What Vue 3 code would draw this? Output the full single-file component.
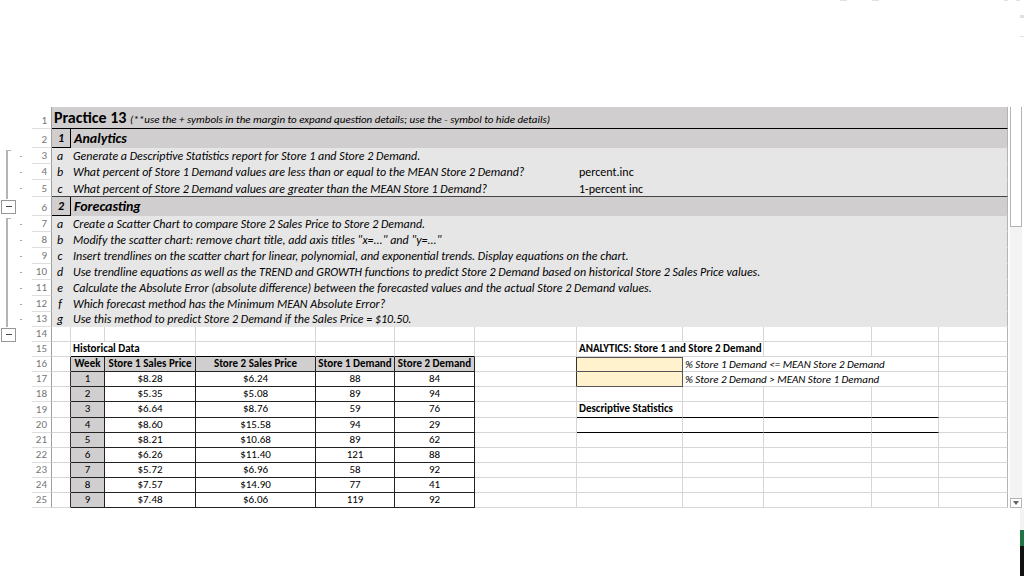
<template>
  <div class="page">
    <header class="top-strip">
      <div class="top-marks">
        <i class="wide"></i>
        <i class="wide second"></i>
        <i></i>
        <i></i>
      </div>
      <div class="side-marks">
        <i class="thick"></i>
        <i></i>
      </div>
    </header>

    <main class="workbook">
      <table class="sheet">
        <colgroup>
          <col v-for="(width, i) in columns" :key="i" :style="{ width: width + 'px' }">
          <col>
        </colgroup>
        <tbody>
          <tr v-for="row in rows" :key="row.n" :class="row.type">
            <td class="outline" :class="row.group">
              <button v-if="row.toggle" type="button" class="toggle" aria-label="Hide detail"></button>
              <span v-else-if="row.group" class="dot"></span>
            </td>
            <th class="num" scope="row">{{ row.n }}</th>
            <td
              v-for="(cell, i) in row.cells"
              :key="i"
              :colspan="cell.span || 1"
              :class="cell.cls"
            >{{ cell.text }}<span v-if="cell.note" class="note">{{ cell.note }}</span></td>
          </tr>
        </tbody>
      </table>

      <div class="scrollbar">
        <div class="thumb"></div>
        <button type="button" class="down" aria-label="Scroll down">
          <svg width="6" height="4" viewBox="0 0 6 4"><path d="M0 0h6L3 4z" fill="#666" /></svg>
        </button>
      </div>
    </main>

    <footer class="bottom-strip">
      <div class="edge">
        <span class="pale"></span>
        <span class="green"></span>
        <span class="dark"></span>
      </div>
    </footer>
  </div>
</template>

<script setup>
// outline gutter, row numbers, then A to K; the last column takes the rest
const columns = [32, 20, 19, 34, 91, 120, 79, 80, 102, 106, 81, 108, 67]

const blank = (count) => Array.from({ length: count }, () => ({}))

function question(n, letter, text, extra) {
  const cells = [{ text: letter, cls: 'letter' }]
  if (extra) {
    cells.push({ text, span: 6, cls: 'question' }, { text: extra, span: 5, cls: 'hint' })
  } else {
    cells.push({ text, span: 11, cls: 'question' })
  }
  const first = letter === 'a' ? ' first' : ''
  return { n, type: 'detail', group: 'line' + first, cells }
}

function section(n, number, title, toggle) {
  return {
    n,
    type: 'section',
    toggle,
    cells: [{ text: number, cls: 'boxed' }, { text: title, span: 11, cls: 'section-title' }]
  }
}

const history = [
  [1, '$8.28', '$6.24', 88, 84],
  [2, '$5.35', '$5.08', 89, 94],
  [3, '$6.64', '$8.76', 59, 76],
  [4, '$8.60', '$15.58', 94, 29],
  [5, '$8.21', '$10.68', 89, 62],
  [6, '$6.26', '$11.40', 121, 88],
  [7, '$5.72', '$6.96', 58, 92],
  [8, '$7.57', '$14.90', 77, 41],
  [9, '$7.48', '$6.06', 119, 92]
]

// right-hand side of the rows that hold more than plain cells
const side = {
  17: [
    { cls: 'before-input' },
    { cls: 'input-cell' },
    { text: '% Store 2 Demand > MEAN Store 1 Demand', span: 3, cls: 'caption' },
    {}
  ],
  19: [
    {},
    { text: 'Descriptive Statistics', cls: 'strong ruled' },
    { cls: 'ruled' },
    { cls: 'ruled' },
    { cls: 'ruled' },
    {}
  ],
  20: [{}, { cls: 'ruled' }, { cls: 'ruled' }, { cls: 'ruled' }, { cls: 'ruled' }, {}]
}

const rows = [
  {
    n: 1,
    type: 'title',
    cells: [{
      text: 'Practice 13 ',
      note: '(**use the + symbols in the margin to expand question details; use the - symbol to hide details)',
      span: 12,
      cls: 'heading'
    }]
  },
  section(2, 1, 'Analytics', false),
  question(3, 'a', 'Generate a Descriptive Statistics report for Store 1 and Store 2 Demand.'),
  question(4, 'b', 'What percent of Store 1 Demand values are less than or equal to the MEAN Store 2 Demand?', 'percent.inc'),
  { ...question(5, 'c', 'What percent of Store 2 Demand values are greater than the MEAN Store 1 Demand?', '1-percent inc'), type: 'detail closing' },
  section(6, 2, 'Forecasting', true),
  question(7, 'a', 'Create a Scatter Chart to compare Store 2 Sales Price to Store 2 Demand.'),
  question(8, 'b', 'Modify the scatter chart: remove chart title, add axis titles "x=..." and "y=..."'),
  question(9, 'c', 'Insert trendlines on the scatter chart for linear, polynomial, and exponential trends. Display equations on the chart.'),
  question(10, 'd', 'Use trendline equations as well as the TREND and GROWTH functions to predict Store 2 Demand based on historical Store 2 Sales Price values.'),
  question(11, 'e', 'Calculate the Absolute Error (absolute difference) between the forecasted values and the actual Store 2 Demand values.'),
  question(12, 'f', 'Which forecast method has the Minimum MEAN Absolute Error?'),
  { ...question(13, 'g', 'Use this method to predict Store 2 Demand if the Sales Price = $10.50.'), type: 'detail last' },
  { n: 14, type: 'plain', toggle: true, cells: blank(12) },
  {
    n: 15,
    type: 'plain',
    cells: [
      {},
      { text: 'Historical Data', span: 2, cls: 'strong ruled' },
      { cls: 'ruled' },
      { cls: 'ruled' },
      { cls: 'ruled' },
      {},
      { text: 'ANALYTICS: Store 1 and Store 2 Demand', span: 2, cls: 'strong' },
      ...blank(3)
    ]
  },
  {
    n: 16,
    type: 'plain',
    cells: [
      { cls: 'before-table' },
      { text: 'Week', cls: 'head' },
      { text: 'Store 1 Sales Price', cls: 'head' },
      { text: 'Store 2 Sales Price', cls: 'head' },
      { text: 'Store 1 Demand', cls: 'head' },
      { text: 'Store 2 Demand', cls: 'head' },
      { cls: 'before-input' },
      { cls: 'input-cell first-input' },
      { text: '% Store 1 Demand <= MEAN Store 2 Demand', span: 3, cls: 'caption' },
      {}
    ]
  },
  ...history.map((values, i) => {
    const n = 17 + i
    return {
      n,
      type: n === 19 ? 'plain tall' : 'plain',
      cells: [
        { cls: 'before-table' },
        ...values.map((text, col) => ({ text, cls: col === 0 ? 'data week' : 'data' })),
        ...(side[n] || blank(6))
      ]
    }
  })
]
</script>

<style>
body {
  margin: 0;
  background: #fff;
}
</style>

<style scoped>
.page {
  display: flex;
  flex-direction: column;
  min-height: 100vh;
  font-family: Calibri, Carlito, Lato, sans-serif;
  font-size: 11px;
  color: #000;
  background: #fff;
}

/* remains of the window frame */
.top-strip {
  height: 107px;
  display: flex;
  justify-content: flex-end;
}
.top-marks {
  display: flex;
  gap: 8px;
}
.top-marks i {
  width: 4px;
  height: 1px;
  background: #e2e2e2;
}
.top-marks .wide {
  width: 7px;
  margin-right: 17px;
}
.top-marks .second {
  margin-right: 117px;
}
.side-marks {
  width: 4px;
  padding-top: 15px;
  display: flex;
  flex-direction: column;
  gap: 18px;
}
.side-marks i {
  height: 1px;
  background: #e0e0e0;
}
.side-marks .thick {
  height: 3px;
}

.workbook {
  display: flex;
  gap: 2px;
  padding-right: 2px;
}

.sheet {
  flex: 1;
  width: 100%;
  min-width: 0;
  table-layout: fixed;
  border-collapse: separate;
  border-spacing: 0;
}
td,
th {
  box-sizing: border-box;
  padding: 0 2px;
  line-height: 14px;
  white-space: nowrap;
  border-right: 1px solid #d6d6d6;
  border-bottom: 1px solid #d6d6d6;
  vertical-align: bottom;
}
tr > :last-child {
  border-right-color: #b4b4b4;
}

.plain { height: 15px; }
.tall { height: 16px; }
.tall td { vertical-align: top; }
.detail { height: 16px; }
.closing { height: 17px; }
.last { height: 15px; }
.title { height: 22px; }
.section { height: 19px; }

/* outline gutter */
.outline {
  position: relative;
  padding: 0;
  border: 0;
  vertical-align: middle;
}
.line::before {
  content: '';
  position: absolute;
  left: 6px;
  top: 0;
  bottom: 0;
  border-left: 2px solid #b4b4b4;
}
.first::before {
  top: 2px;
  width: 3px;
  border-top: 1px solid #b4b4b4;
}
.closing .line::before {
  bottom: -2px;
}
.dot {
  display: block;
  width: 2px;
  height: 1px;
  margin-left: 20px;
  background: #a6a6a6;
}
.toggle {
  display: flex;
  align-items: center;
  justify-content: center;
  width: 15px;
  height: 14px;
  margin: 0 0 0 1px;
  padding: 0;
  border: 1px solid #969696;
  background: #fff;
}
.toggle::before {
  content: '';
  width: 6px;
  height: 1px;
  background: #444;
}

.num {
  padding: 0 4px 0 0;
  font-weight: 400;
  text-align: right;
  color: #767676;
  border-right-color: #a0a0a0;
  border-bottom-color: #dedede;
}

/* assignment block */
.heading {
  background: #d0cece;
  border-bottom-color: #000;
  font-size: 16px;
  font-weight: 700;
  line-height: 20px;
}
.note {
  font-size: 11px;
  font-weight: 400;
  font-style: italic;
  line-height: 14px;
}
.boxed,
.section-title {
  background: #d0cece;
  font-weight: 700;
  font-style: italic;
  line-height: 17px;
}
.section-title {
  padding-left: 3px;
  border-bottom-color: #d0cece;
  font-size: 14px;
}
.boxed {
  border-right-color: #000;
  border-bottom-color: #000;
  font-size: 12px;
  text-align: center;
}
.letter,
.question,
.hint {
  background: #e6e6e6;
  border-color: #e6e6e6;
  font-size: 12px;
  font-style: italic;
}
.letter {
  padding: 0 3px 0 0;
  border-right: 0;
  text-align: center;
}
.question:not(:last-child) {
  border-right: 0;
}
.hint {
  font-style: normal;
}
.closing .letter,
.closing .question,
.closing .hint {
  border-bottom-color: #444;
}

/* data */
.strong {
  font-weight: 700;
}
.ruled {
  border-bottom-color: #000;
}
.before-table,
.before-input {
  border-right-color: #333;
}
.head {
  padding: 0;
  background: #d0cece;
  border-color: #222;
  font-weight: 700;
  text-align: center;
}
.data {
  border-color: #222;
  text-align: center;
}
.week {
  background: #d0cece;
}
.input-cell {
  background: #fff2cc;
  border-color: #555;
}
.first-input {
  border-top: 1px solid #555;
}
/* the first input's top rule takes the place of the grid line above it */
.first-input,
.caption {
  line-height: 13px;
}
.caption {
  font-style: italic;
}

.scrollbar {
  display: flex;
  flex-direction: column;
  flex-shrink: 0;
  justify-content: space-between;
  width: 12px;
  background: #f3f3f3;
}
.thumb {
  height: 30%;
  box-sizing: border-box;
  border: 1px solid #b4b4b4;
  border-top: 0;
  background: #fff;
}
.down {
  display: flex;
  align-items: center;
  justify-content: center;
  height: 10px;
  padding: 0;
  border: 1px solid #b4b4b4;
  background: #fff;
}

.bottom-strip {
  flex: 1;
  display: flex;
  justify-content: flex-end;
}
.edge {
  display: flex;
  flex-direction: column;
  width: 4px;
}
.pale {
  height: 22px;
  background: #f3f3f3;
}
.green {
  height: 16px;
  background: #217346;
}
.dark {
  flex: 1;
  background: #111;
}
</style>
